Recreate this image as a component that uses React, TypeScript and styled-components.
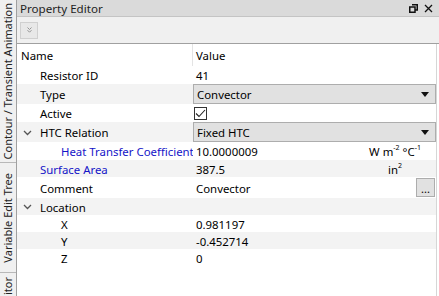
import React from 'react';
import styled, { createGlobalStyle } from 'styled-components';

const GlobalStyle = createGlobalStyle`
  html, body {
    margin: 0;
    padding: 0;
    background: #ffffff;
  }
  body {
    font-family: "Noto Sans", "Segoe UI", sans-serif;
    font-size: 11.4px;
    color: #000;
  }
`;

const Window = styled.div`
  width: 439px;
  height: 296px;
  display: grid;
  grid-template-columns: 17px 1fr;
  overflow: hidden;
  background: #fff;
`;

const SideBar = styled.div`
  display: flex;
  flex-direction: column;
  background: #f0f0f0;
  border-right: 1px solid #a0a0a0;
`;

const SideTab = styled.div<{ $h?: number; $top?: boolean }>`
  height: ${(p) => (p.$h ? p.$h + 'px' : 'auto')};
  flex: ${(p) => (p.$h ? '0 0 auto' : '1 1 auto')};
  display: flex;
  justify-content: center;
  align-items: ${(p) => (p.$top ? 'flex-start' : 'center')};
  padding-top: ${(p) => (p.$top ? '4px' : '0')};
  border-bottom: 1px solid #b8b8b8;
  box-sizing: border-box;
  overflow: hidden;
`;

const SideLabel = styled.span`
  writing-mode: vertical-rl;
  transform: rotate(180deg);
  white-space: nowrap;
  color: #222;
  font-size: 11px;
  line-height: 16px;
`;

const Main = styled.div`
  display: flex;
  flex-direction: column;
  min-width: 0;
`;

const TitleBar = styled.div`
  height: 17px;
  display: flex;
  align-items: center;
  justify-content: space-between;
  background: #dadada;
  border-bottom: 1px solid #c4c4c4;
  padding: 0 6px 0 3px;
  box-sizing: border-box;
  color: #1e1e1e;
  font-size: 11.6px;
`;

const TitleIcons = styled.div`
  display: flex;
  gap: 6px;
  align-items: center;
`;

const Toolbar = styled.div`
  height: 27px;
  background: #f0f0f0;
  border-bottom: 1px solid #a0a0a0;
  display: flex;
  align-items: center;
  padding-left: 3px;
  box-sizing: border-box;
`;

const ToolButton = styled.div`
  width: 18px;
  height: 17px;
  background: #e8e8e8;
  border: 1px solid #d0d0d0;
  box-sizing: border-box;
  display: flex;
  align-items: center;
  justify-content: center;
`;

const Table = styled.div`
  flex: 1;
  display: flex;
  flex-direction: column;
  border-right: 1px solid #d6d6d6;
  margin-right: 2px;
`;

const Row = styled.div<{ $h: number; $alt?: boolean }>`
  height: ${(p) => p.$h}px;
  display: grid;
  grid-template-columns: 176px 1fr;
  background: ${(p) => (p.$alt ? '#f3f3f3' : '#ffffff')};
`;

const HeaderRow = styled(Row)`
  background: #fff;
`;

const NameCell = styled.div<{ $indent: number; $blue?: boolean; $divider?: boolean }>`
  display: flex;
  align-items: center;
  padding-left: ${(p) => p.$indent}px;
  padding-top: 1px;
  color: ${(p) => (p.$blue ? '#1414c8' : '#000')};
  white-space: nowrap;
  overflow: hidden;
  border-right: ${(p) => (p.$divider ? '1px solid #e4e4e4' : 'none')};
  box-sizing: border-box;
`;

const Chevron = styled.span`
  width: 17px;
  display: inline-flex;
  align-items: center;
  justify-content: flex-start;
  padding-left: 6px;
  margin-left: -23px;
  margin-right: 6px;
  box-sizing: border-box;
`;

const ValueCell = styled.div`
  display: flex;
  align-items: center;
  padding-left: 3px;
  padding-top: 1px;
  white-space: nowrap;
  min-width: 0;
  box-sizing: border-box;
`;

const Combo = styled.div`
  flex: 1;
  height: 20px;
  margin-top: -1px;
  display: flex;
  align-items: center;
  justify-content: space-between;
  background: #e1e1e1;
  border: 1px solid #adadad;
  box-sizing: border-box;
  padding: 1px 6px 0 3px;
  margin-left: -3px;
`;

const Check = styled.div`
  width: 13px;
  height: 13px;
  border: 1px solid #333;
  background: #fff;
  box-sizing: border-box;
  margin-left: -2px;
  display: flex;
  align-items: center;
  justify-content: center;
`;

const ValueText = styled.span`
  flex: 1;
`;

const Unit = styled.span`
  width: 66px;
  text-align: center;
  margin-right: 8px;
`;

const Sup = styled.sup`
  font-size: 7px;
  vertical-align: 6px;
  line-height: 0;
`;

const DotsButton = styled.div`
  width: 19px;
  height: 19px;
  margin-top: -1px;
  background: #e1e1e1;
  border: 1px solid #adadad;
  box-sizing: border-box;
  display: flex;
  align-items: flex-end;
  justify-content: center;
  line-height: 14px;
  font-size: 11px;
  margin-right: 1px;
`;

const ChevronIcon = () => (
  <svg width="9" height="6" viewBox="0 0 9 6">
    <path d="M1 1 L4.5 4.5 L8 1" fill="none" stroke="#555" strokeWidth="1.3" />
  </svg>
);

const ArrowDown = () => (
  <svg width="8" height="5" viewBox="0 0 8 5">
    <path d="M0 0 H8 L4 5 Z" fill="#111" />
  </svg>
);

type Item = {
  name: string;
  indent: number;
  h: number;
  blue?: boolean;
  group?: boolean;
  kind: 'text' | 'combo' | 'check' | 'unit' | 'dots';
  value?: string;
  unit?: React.ReactNode;
};

const items: Item[] = [
  { name: 'Resistor ID', indent: 23, h: 18, kind: 'text', value: '41' },
  { name: 'Type', indent: 23, h: 20, kind: 'combo', value: 'Convector' },
  { name: 'Active', indent: 23, h: 18, kind: 'check' },
  { name: 'HTC Relation', indent: 23, h: 20, group: true, kind: 'combo', value: 'Fixed HTC' },
  {
    name: 'Heat Transfer Coefficient',
    indent: 44,
    h: 18,
    blue: true,
    kind: 'unit',
    value: '10.0000009',
    unit: (
      <>
        W m<Sup>-2</Sup> °C<Sup>-1</Sup>
      </>
    ),
  },
  {
    name: 'Surface Area',
    indent: 23,
    h: 17,
    blue: true,
    kind: 'unit',
    value: '387.5',
    unit: (
      <>
        in<Sup>2</Sup>
      </>
    ),
  },
  { name: 'Comment', indent: 23, h: 21, kind: 'dots', value: 'Convector' },
  { name: 'Location', indent: 23, h: 17, group: true, kind: 'text' },
  { name: 'X', indent: 44, h: 17, kind: 'text', value: '0.981197' },
  { name: 'Y', indent: 44, h: 17, kind: 'text', value: '-0.452714' },
  { name: 'Z', indent: 44, h: 17, kind: 'text', value: '0' },
];

function renderValue(it: Item) {
  switch (it.kind) {
    case 'combo':
      return (
        <Combo>
          <span>{it.value}</span>
          <ArrowDown />
        </Combo>
      );
    case 'check':
      return (
        <Check>
          <svg width="11" height="9" viewBox="0 0 11 9">
            <path d="M1 4.5 L4 7.5 L10 1" fill="none" stroke="#222" strokeWidth="1.1" />
          </svg>
        </Check>
      );
    case 'unit':
      return (
        <>
          <ValueText>{it.value}</ValueText>
          <Unit>{it.unit}</Unit>
        </>
      );
    case 'dots':
      return (
        <>
          <ValueText>{it.value}</ValueText>
          <DotsButton>...</DotsButton>
        </>
      );
    default:
      return <ValueText>{it.value}</ValueText>;
  }
}

export default function App() {
  return (
    <>
      <GlobalStyle />
      <Window>
        <SideBar>
          <SideTab $h={163}>
            <SideLabel>Contour / Transient Animation</SideLabel>
          </SideTab>
          <SideTab $h={110}>
            <SideLabel>Variable Edit Tree</SideLabel>
          </SideTab>
          <SideTab $top>
            <SideLabel>Property Editor</SideLabel>
          </SideTab>
        </SideBar>
        <Main>
          <TitleBar>
            <span>Property Editor</span>
            <TitleIcons>
              <svg width="9" height="9" viewBox="0 0 9 9">
                <path d="M3 0.75 H8.25 V6 H6" fill="none" stroke="#111" strokeWidth="1.5" />
                <rect x="0.75" y="3" width="5.25" height="5.25" fill="none" stroke="#111" strokeWidth="1.5" />
              </svg>
              <svg width="9" height="9" viewBox="0 0 9 9">
                <path d="M1 1 L8 8 M8 1 L1 8" stroke="#111" strokeWidth="1.3" />
              </svg>
            </TitleIcons>
          </TitleBar>
          <Toolbar>
            <ToolButton>
              <svg width="5" height="6" viewBox="0 0 5 6">
                <path d="M0.5 0.5 L2.5 2.5 L4.5 0.5 M0.5 3.2 L2.5 5.2 L4.5 3.2" fill="none" stroke="#8a8a8a" strokeWidth="0.9" />
              </svg>
            </ToolButton>
          </Toolbar>
          <Table>
            <HeaderRow $h={22}>
              <NameCell $indent={4} $divider>
                Name
              </NameCell>
              <ValueCell>Value</ValueCell>
            </HeaderRow>
            {items.map((it, i) => (
              <Row key={it.name} $h={it.h} $alt={i % 2 === 1}>
                <NameCell $indent={it.indent} $blue={it.blue}>
                  {it.group && (
                    <Chevron>
                      <ChevronIcon />
                    </Chevron>
                  )}
                  {it.name}
                </NameCell>
                <ValueCell>{renderValue(it)}</ValueCell>
              </Row>
            ))}
          </Table>
        </Main>
      </Window>
    </>
  );
}
